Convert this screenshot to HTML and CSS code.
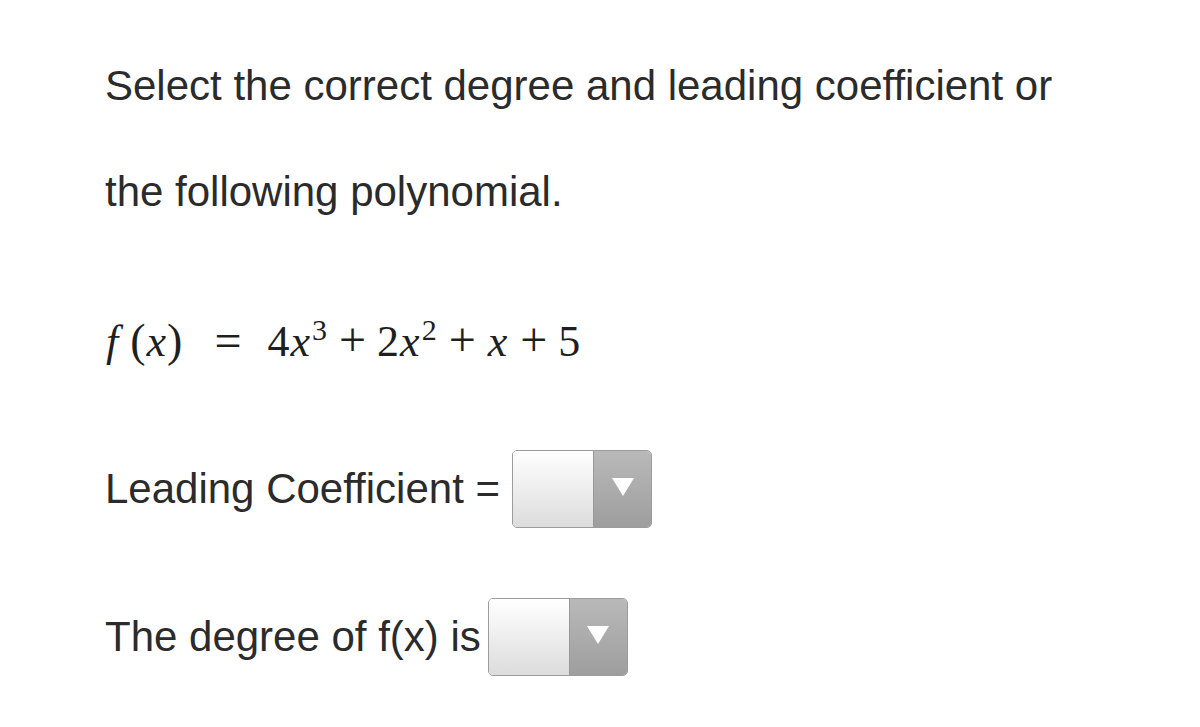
FILE: index.html
```html
<!DOCTYPE html>
<html lang="en">
<head>
    <meta charset="UTF-8">
    <meta name="viewport" content="width=device-width, initial-scale=1.0">
    <title>Polynomial</title>
    <link rel="stylesheet" href="styles.css">
</head>
<body>
    <main class="question">
        <p class="prompt">Select the correct degree and leading coefficient or</p>
        <p class="prompt">the following polynomial.</p>

        <div class="formula">
            <span class="lhs"><i class="fn">f</i><span class="paren">(</span><i>x</i><span class="paren">)</span></span>
            <span class="eq">=</span>
            <span class="rhs">4<i>x</i><sup>3</sup><span class="op">+</span>2<i>x</i><sup>2</sup><span class="op">+</span><i>x</i><span class="op">+</span>5</span>
        </div>

        <div class="answer-row">
            <span class="label">Leading Coefficient =</span>
            <div class="dropdown">
                <span class="field"></span>
                <span class="arrow"><span class="tri"></span></span>
            </div>
        </div>

        <div class="answer-row second">
            <span class="label">The degree of f(x) is</span>
            <div class="dropdown">
                <span class="field"></span>
                <span class="arrow"><span class="tri"></span></span>
            </div>
        </div>
    </main>
</body>
</html>
```

FILE: styles.css
```css
body {
    margin: 0;
    padding: 0;
    background: #fff;
    color: #2b2b2b;
    font-family: "Liberation Sans", Arial, sans-serif;
}
.question {
    padding: 33px 0 0 105px;
}
.prompt {
    font-size: 42px;
    line-height: 106px;
    margin: 0;
    height: 106px;
}
.formula {
    font-family: "Liberation Serif", "Times New Roman", serif;
    font-size: 44px;
    color: #1f1f1f;
    margin-top: 66px;
    height: 60px;
    line-height: 60px;
    display: flex;
    align-items: center;
}
.formula i {
    font-style: italic;
    margin: 0 1px;
}
.formula .fn {
    margin-right: 12px;
}
.formula .paren {
    font-size: 46px;
}
.formula sup {
    font-size: 30px;
    vertical-align: 16px;
    line-height: 0;
    margin-left: 1px;
}
.formula .eq {
    margin: 0 26px 0 32px;
    font-size: 48px;
}
.formula .op {
    margin: 0 11px 0 12px;
    font-size: 48px;
}
.answer-row {
    display: flex;
    align-items: center;
    height: 80px;
    margin-top: 78px;
}
.answer-row.second {
    margin-top: 68px;
}
.label {
    font-size: 42px;
    margin-right: 12px;
}
.second .label {
    margin-right: 7px;
}
.dropdown {
    display: flex;
    width: 138px;
    height: 76px;
    border: 1px solid #9c9c9c;
    border-radius: 5px;
    overflow: hidden;
}
.field {
    width: 80px;
    background: linear-gradient(#ffffff, #dcdcdc);
    border-right: 1px solid #999;
}
.arrow {
    flex: 1;
    background: linear-gradient(#b9b9b9, #9e9e9e);
    display: flex;
    align-items: center;
    justify-content: center;
}
.tri {
    width: 0;
    height: 0;
    border-left: 11px solid transparent;
    border-right: 11px solid transparent;
    border-top: 18px solid #fff;
    margin-top: -4px;
}
```
